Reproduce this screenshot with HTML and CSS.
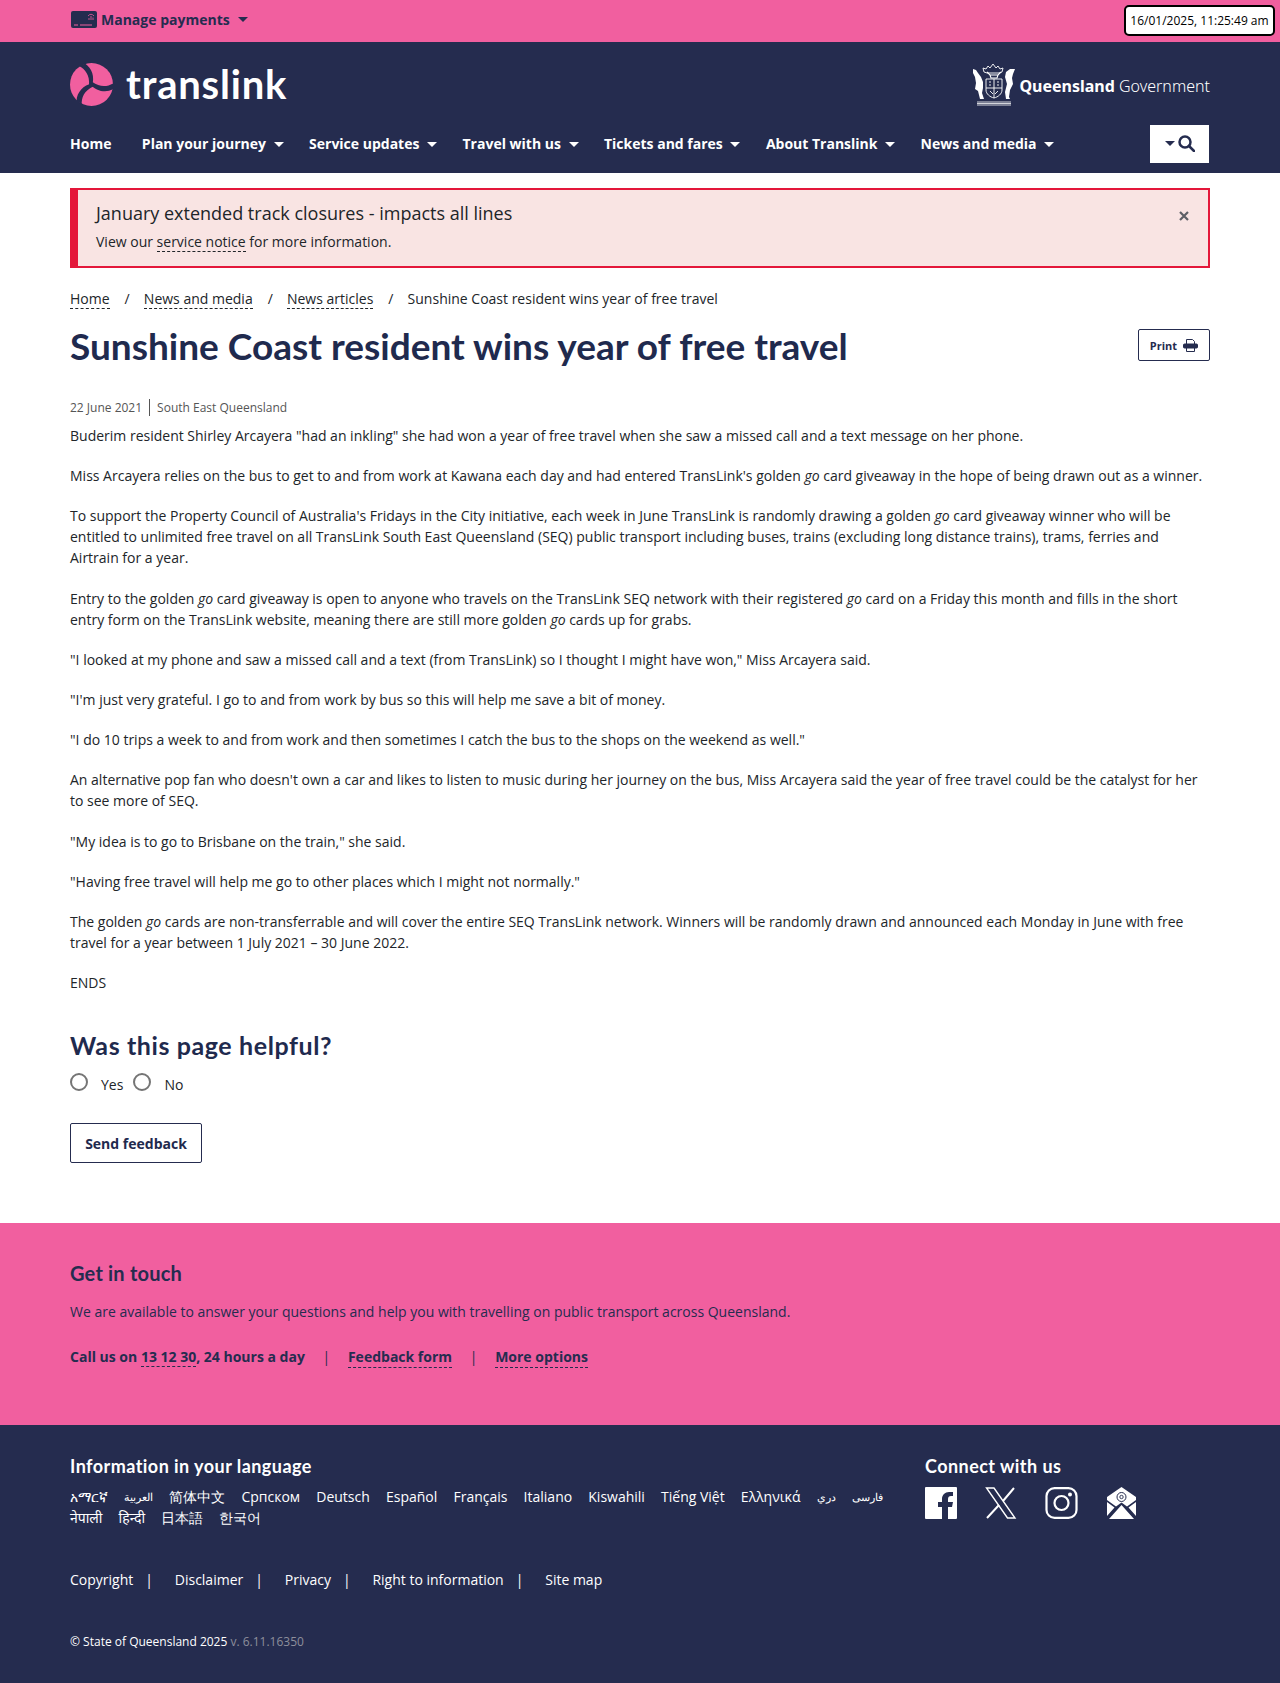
FILE: index.html
```html
<!DOCTYPE html>
<html lang="en">
<head>
  <meta charset="UTF-8">
  <title>Sunshine Coast resident wins year of free travel</title>
  <meta name="viewport" content="width=device-width, initial-scale=1.0">
  <link rel="stylesheet" href="styles.css">
</head>
<body>
  <div class="topbar">
    <div class="wrap topbar-inner">
      <a class="payments" href="#">
        <svg class="payments-icon" width="26" height="17" viewBox="0 0 26 17">
          <rect width="26" height="17" rx="2" fill="#252c4f"/>
          <path d="M3 14h4M9 14h12" stroke="#f15f9f" stroke-width="1"/>
          <path d="M18 9V7M20 9V5M22 9V6.500M17 5q3-3.500 6 0" stroke="#f15f9f" stroke-width=".8" fill="none"/>
        </svg>
        Manage payments <span class="caret caret-dark"></span>
      </a>
    </div>
    <div class="clock">16/01/2025, 11:25:49 am</div>
  </div>

  <header class="header">
    <div class="wrap">
      <div class="brand-row">
        <a class="logo" href="#">
          <svg width="43" height="43" viewBox="0 0 43 43">
            <circle cx="21.500" cy="21.500" r="21.500" fill="#f15f9f"/>
            <g fill="#252c4f">
              <path d="M9 3C15 6 20 12 19 22L22 23C25 14 22 5 15 .5Z"/>
              <path d="M9 3C15 6 20 12 19 22L22 23C25 14 22 5 15 .5Z" transform="rotate(120 21.500 21.500)"/>
              <path d="M9 3C15 6 20 12 19 22L22 23C25 14 22 5 15 .5Z" transform="rotate(240 21.500 21.500)"/>
            </g>
          </svg>
          <span class="logo-text">translink</span>
        </a>
        <a class="gov" href="#">
          <svg class="crest" width="44" height="43" viewBox="0 0 44 43" fill="none" stroke="#fff" stroke-width=".9">
            <path d="M11 5l3 1 2-3 2 2 3-4 3 4 2-2 2 3 3-1-1 4-3 1H15l-3-1z"/>
            <path d="M15 9l3 3h8l3-3M18 12l1 3h6l1-3" stroke-width="1.100"/>
            <path d="M14 16h16v11c0 4-4 7-8 8-4-1-8-4-8-8z"/>
            <path d="M22 16v19M14 25h16M17 19h2M25 19h2M17 22h2M25 22h2M18 28l3 3M26 28l-3 3"/>
            <path d="M1 6l3 1 2 3 3 4 2 5v6l-1 5 2 6H8l-2-8-3-2 1-6-1-6-2-4z" fill="#fff" stroke="none"/>
            <path d="M43 6l-2 5-1 4 1 6-3 6-1 7 1 2h-4l-1-7 2-8-2-7 1-5 4-3z" fill="#fff" stroke="none"/>
            <path d="M5 39h34M5 42h34M5 40.500h34" stroke-width=".8"/>
          </svg>
          <span class="gov-text"><b>Queensland</b> Government</span>
        </a>
      </div>
      <nav class="nav">
        <a class="nav-home" href="#">Home</a>
        <a href="#">Plan your journey <span class="caret"></span></a>
        <a href="#">Service updates <span class="caret"></span></a>
        <a href="#">Travel with us <span class="caret"></span></a>
        <a href="#">Tickets and fares <span class="caret"></span></a>
        <a href="#">About Translink <span class="caret"></span></a>
        <a href="#">News and media <span class="caret"></span></a>
        <button class="search-btn">
          <span class="caret caret-dark"></span>
          <svg width="17" height="17" viewBox="0 0 17 17" fill="none" stroke="#252c4f" stroke-width="2.500">
            <circle cx="7" cy="7" r="5.500"/>
            <path d="M11 11l5 5" stroke-linecap="round"/>
          </svg>
        </button>
      </nav>
    </div>
  </header>

  <main class="wrap">
    <div class="alert">
      <div>
        <div class="alert-title">January extended track closures - impacts all lines</div>
        <div class="alert-text">View our <a href="#">service notice</a> for more information.</div>
      </div>
      <svg class="alert-close" width="10" height="10" viewBox="0 0 10 10">
        <path d="M1 1l8 8M9 1l-8 8" stroke="#5d5f66" stroke-width="2.200"/>
      </svg>
    </div>

    <div class="breadcrumb">
      <a href="#">Home</a><span class="sep">/</span>
      <a href="#">News and media</a><span class="sep">/</span>
      <a href="#">News articles</a><span class="sep">/</span>
      <span>Sunshine Coast resident wins year of free travel</span>
    </div>

    <div class="title-row">
      <h1>Sunshine Coast resident wins year of free travel</h1>
      <button class="print-btn">
        Print
        <svg width="15" height="13" viewBox="0 0 15 13" fill="none" stroke="#252c4f">
          <path d="M3.500 5V.5h6l2 2V5M3.500 9v3.500h8V9"/>
          <rect x=".5" y="5" width="14" height="4" rx="1" fill="#252c4f"/>
        </svg>
      </button>
    </div>

    <div class="meta"><span>22 June 2021</span><span class="meta-place">South East Queensland</span></div>

    <article class="article">
      <p>Buderim resident Shirley Arcayera "had an inkling" she had won a year of free travel when she saw a missed call and a text message on her phone.</p>
      <p>Miss Arcayera relies on the bus to get to and from work at Kawana each day and had entered TransLink's golden <em>go</em> card giveaway in the hope of being drawn out as a winner.</p>
      <p>To support the Property Council of Australia's Fridays in the City initiative, each week in June TransLink is randomly drawing a golden <em>go</em> card giveaway winner who will be entitled to unlimited free travel on all TransLink South East Queensland (SEQ) public transport including buses, trains (excluding long distance trains), trams, ferries and Airtrain for a year.</p>
      <p>Entry to the golden <em>go</em> card giveaway is open to anyone who travels on the TransLink SEQ network with their registered <em>go</em> card on a Friday this month and fills in the short entry form on the TransLink website, meaning there are still more golden <em>go</em> cards up for grabs.</p>
      <p>"I looked at my phone and saw a missed call and a text (from TransLink) so I thought I might have won," Miss Arcayera said.</p>
      <p>"I'm just very grateful. I go to and from work by bus so this will help me save a bit of money.</p>
      <p>"I do 10 trips a week to and from work and then sometimes I catch the bus to the shops on the weekend as well."</p>
      <p>An alternative pop fan who doesn't own a car and likes to listen to music during her journey on the bus, Miss Arcayera said the year of free travel could be the catalyst for her to see more of SEQ.</p>
      <p>"My idea is to go to Brisbane on the train," she said.</p>
      <p>"Having free travel will help me go to other places which I might not normally."</p>
      <p>The golden <em>go</em> cards are non-transferrable and will cover the entire SEQ TransLink network. Winners will be randomly drawn and announced each Monday in June with free travel for a year between 1 July 2021 – 30 June 2022.</p>
      <p>ENDS</p>
    </article>

    <section class="feedback">
      <h2>Was this page helpful?</h2>
      <div class="radios">
        <span class="radio"></span><span class="radio-label">Yes</span>
        <span class="radio"></span><span class="radio-label">No</span>
      </div>
      <button class="send-btn">Send feedback</button>
    </section>
  </main>

  <section class="contact">
    <div class="wrap">
      <h3>Get in touch</h3>
      <p>We are available to answer your questions and help you with travelling on public transport across Queensland.</p>
      <div class="contact-links">
        <span>Call us on <a href="#">13 12 30</a>, 24 hours a day</span>
        <span class="pipe">|</span>
        <a href="#">Feedback form</a>
        <span class="pipe">|</span>
        <a href="#">More options</a>
      </div>
    </div>
  </section>

  <footer class="footer">
    <div class="wrap">
      <div class="footer-top">
        <div class="languages">
          <h4>Information in your language</h4>
          <div class="lang-list">
            <a href="#" lang="am">አማርኛ</a>
            <a href="#" lang="ar" class="lang-small">العربية</a>
            <a href="#" lang="zh">简体中文</a>
            <a href="#">Српском</a>
            <a href="#">Deutsch</a>
            <a href="#">Español</a>
            <a href="#">Français</a>
            <a href="#">Italiano</a>
            <a href="#">Kiswahili</a>
            <a href="#">Tiếng Việt</a>
            <a href="#">Ελληνικά</a>
            <a href="#" lang="prs" class="lang-small">دري</a>
            <a href="#" lang="fa" class="lang-small">فارسی</a>
            <a href="#" lang="ne">नेपाली</a>
            <a href="#" lang="hi">हिन्दी</a>
            <a href="#" lang="ja">日本語</a>
            <a href="#" lang="ko">한국어</a>
          </div>
        </div>
        <div class="connect">
          <h4>Connect with us</h4>
          <div class="social">
            <svg width="32" height="32" viewBox="0 0 32 32">
              <path fill="#fff" fill-rule="evenodd" d="M1 0h30a1 1 0 0 1 1 1v30a1 1 0 0 1-1 1h-8V20h4l1-5h-5v-3c0-2 1-3 3-3h2V5h-4c-4 0-7 3-7 7v3h-4v5h4v12H1a1 1 0 0 1-1-1V1a1 1 0 0 1 1-1z"/>
            </svg>
            <svg width="32" height="32" viewBox="0 0 32 32" fill="none" stroke="#fff" stroke-width="1.400">
              <path d="M1.500 1h7.500l21 30h-7.500z"/>
              <path d="M29 1L18 14M14 18L2 31" stroke-width="2"/>
            </svg>
            <svg width="33" height="32" viewBox="0 0 33 32" fill="none" stroke="#fff" stroke-width="2.200">
              <rect x="1.500" y="1.100" width="30" height="29.800" rx="8"/>
              <circle cx="16.500" cy="16" r="7"/>
              <circle cx="25" cy="7.500" r="2" fill="#fff" stroke="none"/>
            </svg>
            <svg class="mail" width="29" height="32" viewBox="0 0 29 32">
              <path fill="#fff" d="M14.500 0L29 10v3l-9 6.500-5.500-4-5.500 4L0 13v-3z"/>
              <path fill="#fff" d="M0 15l7.500 5.500L0 29zM29 15l-7.500 5.500L29 29zM14.500 18L27 32H2z"/>
              <circle cx="14.500" cy="10" r="4.500" fill="none" stroke="#252c4f"/>
              <circle cx="14.500" cy="10" r="1.700" fill="none" stroke="#252c4f" stroke-width=".9"/>
            </svg>
          </div>
        </div>
      </div>
      <div class="footer-links">
        <a href="#">Copyright</a><span class="pipe">|</span>
        <a href="#">Disclaimer</a><span class="pipe">|</span>
        <a href="#">Privacy</a><span class="pipe">|</span>
        <a href="#">Right to information</a><span class="pipe">|</span>
        <a href="#">Site map</a>
      </div>
      <div class="copyright">© State of Queensland 2025 <span class="version">v. 6.11.16350</span></div>
    </div>
  </footer>
</body>
</html>
```

FILE: styles.css
```css
* {
  box-sizing: border-box;
}

body {
  margin: 0;
  font-family: "Open Sans", "Noto Sans", sans-serif;
  font-size: 14px;
  line-height: 21px;
  color: #212529;
  background: #fff;
}

a {
  color: inherit;
  text-decoration: none;
}

.wrap {
  width: 1140px;
  margin: 0 auto;
}

.caret {
  display: inline-block;
  width: 0;
  height: 0;
  margin-left: 4px;
  vertical-align: 2px;
  border-left: 5px solid transparent;
  border-right: 5px solid transparent;
  border-top: 5px solid #fff;
}

.caret-dark {
  border-top-color: #252c4f;
}

/* top strip */
.topbar {
  position: relative;
  height: 42px;
  background: #f15f9f;
}

.topbar-inner {
  height: 38px;
  display: flex;
  align-items: center;
}

.payments {
  display: flex;
  align-items: center;
  gap: 4px;
  margin-left: 1px;
  font-weight: 700;
  color: #252c4f;
}

.payments .caret {
  margin-left: 4px;
}

.clock {
  position: absolute;
  top: 5px;
  right: 5px;
  width: 151px;
  height: 31px;
  border: 2px solid #000;
  border-radius: 5px;
  background: #fff;
  color: #000;
  font-family: "Open Sans", sans-serif;
  font-size: 12px;
  line-height: 27px;
  text-align: center;
}

/* header */
.header {
  height: 131px;
  background: #252c4f;
  color: #fff;
}

.brand-row {
  height: 82px;
  display: flex;
  justify-content: space-between;
  padding-top: 21px;
}

.logo {
  display: flex;
  gap: 13px;
  height: 43px;
  align-items: center;
}

.logo-text {
  font-family: Lato, sans-serif;
  font-size: 40px;
  font-weight: 700;
  line-height: 43px;
  letter-spacing: .8px;
}

.gov {
  display: flex;
  align-items: center;
  gap: 3px;
  height: 43px;
}

.gov-text {
  padding-top: 3px;
  font-family: "Noto Sans", sans-serif;
  font-size: 16px;
  font-weight: 300;
}

.gov-text b {
  font-weight: 700;
}

.nav {
  display: flex;
  align-items: center;
  gap: 25.450px;
  height: 38px;
  font-weight: 700;
}

.nav-home {
  margin-right: 5px;
}

.search-btn {
  display: flex;
  align-items: center;
  justify-content: center;
  gap: 3px;
  width: 59px;
  height: 38px;
  margin: 1px 1px 0 auto;
  border: 0;
  background: #fff;
}

.search-btn .caret {
  margin: 0;
}

/* alert */
.alert {
  display: flex;
  justify-content: space-between;
  height: 80px;
  margin-top: 15px;
  padding: 10px 16px 0 18px;
  border: 2px solid #e4173a;
  border-left-width: 8px;
  background: #f9e4e3;
}

.alert-title {
  font-size: 18px;
  line-height: 27px;
}

.alert-text {
  margin-top: 4px;
}

.alert-text a,
.breadcrumb a,
.contact-links a {
  border-bottom: 1px dashed currentColor;
}

.alert-close {
  margin: 11px 3px 0 0;
}

/* breadcrumb and title */
.breadcrumb {
  margin-top: 20px;
}

.sep {
  margin: 0 10.500px 0 15px;
}

.title-row {
  display: flex;
  justify-content: space-between;
  align-items: flex-start;
  margin-top: 14px;
}

h1 {
  margin: 0;
  font-family: Lato, sans-serif;
  font-size: 37px;
  line-height: 46px;
  font-weight: 700;
  color: #1f2a4e;
}

.print-btn {
  display: flex;
  align-items: center;
  justify-content: center;
  gap: 6px;
  width: 72px;
  height: 32px;
  margin-top: 6px;
  border: 1px solid #252c4f;
  border-radius: 2px;
  background: #fff;
  color: #252c4f;
  font-family: "Open Sans", sans-serif;
  font-size: 11px;
  font-weight: 700;
}

.meta {
  margin-top: 30px;
  font-size: 12px;
  line-height: 18px;
  color: #555;
}

.meta-place {
  margin-left: 7px;
  padding-left: 7px;
  border-left: 1px solid #555;
}

/* article */
.article {
  margin-top: 8px;
}

.article p {
  margin: 0 0 19.200px;
}

/* feedback */
.feedback {
  margin-top: 36px;
  height: 194px;
}

h2 {
  margin: 0;
  font-family: Lato, sans-serif;
  font-size: 25px;
  line-height: 32px;
  font-weight: 700;
  letter-spacing: .6px;
  color: #1f2a4e;
}

.radios {
  display: flex;
  align-items: center;
  height: 21px;
  margin-top: 13px;
}

.radio {
  width: 18px;
  height: 18px;
  margin-top: -5px;
  border: 2px solid #757575;
  border-radius: 50%;
}

.radio-label {
  margin: 0 10px 0 13px;
}

.send-btn {
  display: block;
  width: 132px;
  height: 40px;
  margin-top: 28px;
  border: 1px solid #252c4f;
  border-radius: 2px;
  background: #fff;
  color: #1f2a4e;
  font-family: "Open Sans", sans-serif;
  font-size: 14px;
  font-weight: 700;
}

/* contact */
.contact {
  height: 202px;
  padding-top: 36px;
  background: #f15f9f;
  color: #252c4f;
}

h3 {
  margin: 0;
  font-family: Lato, sans-serif;
  font-size: 20px;
  line-height: 28px;
  font-weight: 700;
  letter-spacing: .2px;
}

.contact p {
  margin: 14px 0 0;
}

.contact-links {
  display: flex;
  margin-top: 24px;
  font-weight: 700;
}

.contact-links .pipe {
  margin: 0 17.700px;
  font-weight: 400;
}

/* footer */
.footer {
  height: 258px;
  padding-top: 29px;
  background: #252c4f;
  color: #fff;
}

.footer-top {
  display: flex;
  justify-content: space-between;
  height: 115px;
}

h4 {
  margin: 0;
  font-family: Lato, sans-serif;
  font-size: 18px;
  line-height: 25px;
  font-weight: 700;
  letter-spacing: .45px;
}

.languages {
  width: 820px;
}

.lang-list {
  display: flex;
  flex-wrap: wrap;
  column-gap: 16.150px;
  margin-top: 7px;
}

.lang-small {
  font-size: 11px;
}

.connect {
  width: 285px;
}

.social {
  display: flex;
  gap: 28px;
  margin-top: 8px;
}

.social .mail {
  margin-left: 1px;
}

.footer-links {
  display: flex;
}

.footer-links .pipe {
  margin: 0 21.800px 0 12px;
}

.copyright {
  margin-top: 43px;
  font-size: 12px;
  line-height: 18px;
}

.version {
  color: #8d8f9c;
}
```
